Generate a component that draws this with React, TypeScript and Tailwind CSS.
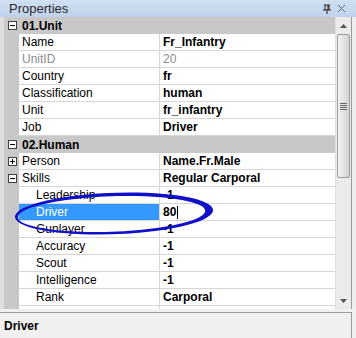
import React from 'react';

type Row =
  | { kind: 'cat'; label: string; open: boolean }
  | { kind: 'prop'; label: string; value: string; sub?: boolean; toggle?: '+' | '-'; dim?: boolean; selected?: boolean };

const rows: Row[] = [
  { kind: 'cat', label: '01.Unit', open: true },
  { kind: 'prop', label: 'Name', value: 'Fr_Infantry' },
  { kind: 'prop', label: 'UnitID', value: '20', dim: true },
  { kind: 'prop', label: 'Country', value: 'fr' },
  { kind: 'prop', label: 'Classification', value: 'human' },
  { kind: 'prop', label: 'Unit', value: 'fr_infantry' },
  { kind: 'prop', label: 'Job', value: 'Driver' },
  { kind: 'cat', label: '02.Human', open: true },
  { kind: 'prop', label: 'Person', value: 'Name.Fr.Male', toggle: '+' },
  { kind: 'prop', label: 'Skills', value: 'Regular Carporal', toggle: '-' },
  { kind: 'prop', label: 'Leadership', value: '-1', sub: true },
  { kind: 'prop', label: 'Driver', value: '80', sub: true, selected: true },
  { kind: 'prop', label: 'Gunlayer', value: '-1', sub: true },
  { kind: 'prop', label: 'Accuracy', value: '-1', sub: true },
  { kind: 'prop', label: 'Scout', value: '-1', sub: true },
  { kind: 'prop', label: 'Intelligence', value: '-1', sub: true },
  { kind: 'prop', label: 'Rank', value: 'Carporal', sub: true },
  // next row is scrolled out of view, only its top shows
  { kind: 'prop', label: '', value: '', sub: true },
];

const Toggle = ({ open }: { open: boolean }) => (
  <span className="relative w-[9px] h-[9px] border border-[#404040] bg-white block">
    <span className="absolute left-[1px] top-[3px] w-[5px] h-[1px] bg-black" />
    {!open && <span className="absolute left-[3px] top-[1px] w-[1px] h-[5px] bg-black" />}
  </span>
);

const App = () => {
  return (
    <div className="relative w-[356px] h-[338px] overflow-hidden bg-[#f0f0f0] text-[12px] text-black font-['Liberation_Sans',_Arial,_sans-serif]">
      {/* Title bar */}
      <div className="h-[17px] flex items-center justify-between bg-gradient-to-b from-[#d1e0f2] to-[#bfd2ea] pl-[9px] pr-[10px]">
        <span className="text-[13px] text-[#2b2b2b] leading-none">Properties</span>
        <div className="flex items-center gap-[6px]">
          <svg width="8" height="10" viewBox="0 0 8 10">
            <path d="M1 1h6M2 1v5M5 1v5M6 1v5M0 6h8M4 6v4" stroke="#222" strokeWidth="1" fill="none" />
          </svg>
          <svg width="9" height="9" viewBox="0 0 9 9">
            <path d="M1 1l7 7M8 1l-7 7" stroke="#5a6a80" strokeWidth="1" fill="none" />
          </svg>
        </div>
      </div>

      {/* Grid + scrollbar */}
      <div className="flex h-[292px]">
        <div className="w-[4px] bg-[#dedede]" />
        <div className="w-[331px] overflow-hidden bg-white">
          {rows.map((row, i) =>
            row.kind === 'cat' ? (
              <div key={i} className="h-[17px] flex items-center bg-[#c8c8c8]">
                <div className="w-[15px] flex justify-center pl-[2px]">
                  <Toggle open={row.open} />
                </div>
                <span className="pl-[3px] font-bold">{row.label}</span>
              </div>
            ) : (
              <div key={i} className="h-[17px] flex">
                <div className="w-[15px] bg-[#c8c8c8] flex items-center justify-center pl-[2px]">
                  {row.toggle && <Toggle open={row.toggle === '-'} />}
                </div>
                <div
                  className={`w-[141px] flex items-center border-b border-r border-[#d6d6d6] ${
                    row.sub ? 'pl-[17px]' : 'pl-[3px]'
                  } ${row.selected ? 'bg-[#3399ff] text-white' : ''} ${row.dim ? 'text-[#8c8c8c]' : ''}`}
                >
                  {row.label}
                </div>
                <div
                  className={`flex-1 flex items-center border-b border-[#d6d6d6] pl-[3px] ${
                    row.dim ? 'text-[#8c8c8c]' : 'font-bold'
                  }`}
                >
                  {row.value}
                  {row.selected && <span className="ml-[1px] w-[1px] h-[13px] bg-black" />}
                </div>
              </div>
            )
          )}
        </div>

        {/* Scrollbar */}
        <div className="w-[16px] flex flex-col bg-[#ebebeb] border-l border-[#e0e0e0]">
          <div className="h-[17px] flex items-center justify-center">
            <svg width="7" height="4" viewBox="0 0 7 4">
              <path d="M3.5 0L7 4H0z" fill="#555" />
            </svg>
          </div>
          <div className="h-[144px] mx-[1px] rounded-[2px] border border-[#9c9c9c] bg-gradient-to-r from-[#f2f2f2] via-[#e4e4e4] to-[#d2d2d2] flex flex-col items-center justify-center gap-[1px]">
            <span className="w-[7px] h-[1px] bg-[#666]" />
            <span className="w-[7px] h-[1px] bg-[#666]" />
            <span className="w-[7px] h-[1px] bg-[#666]" />
            <span className="w-[7px] h-[1px] bg-[#666]" />
          </div>
          <div className="flex-1" />
          <div className="h-[17px] flex items-center justify-center">
            <svg width="7" height="4" viewBox="0 0 7 4">
              <path d="M0 0H7L3.5 4z" fill="#555" />
            </svg>
          </div>
        </div>
        <div className="w-[1px] bg-[#9a9a9a]" />
        <div className="flex-1 bg-[#eeeeee]" />
      </div>

      {/* Description pane */}
      <div className="h-[3px]" />
      <div className="h-[26px] flex">
        <div className="w-[351px] border-t border-[#a0a0a0] bg-[#f0f0f0] flex items-center pl-[4px] font-bold">
          Driver
        </div>
        <div className="w-[1px] bg-[#9a9a9a]" />
      </div>

      {/* Hand-drawn annotation */}
      <svg className="absolute left-0 top-0 pointer-events-none" width="356" height="338">
        <path
          fillRule="evenodd"
          fill="#1010c8"
          d="M15 216 A98 20.5 -2 1 0 213 211 A98 20.5 -2 1 0 15 216 Z M18 216 A92.5 17.5 -2 1 0 205 212 A92.5 17.5 -2 1 0 18 216 Z"
        />
      </svg>
    </div>
  );
};

export default App;
